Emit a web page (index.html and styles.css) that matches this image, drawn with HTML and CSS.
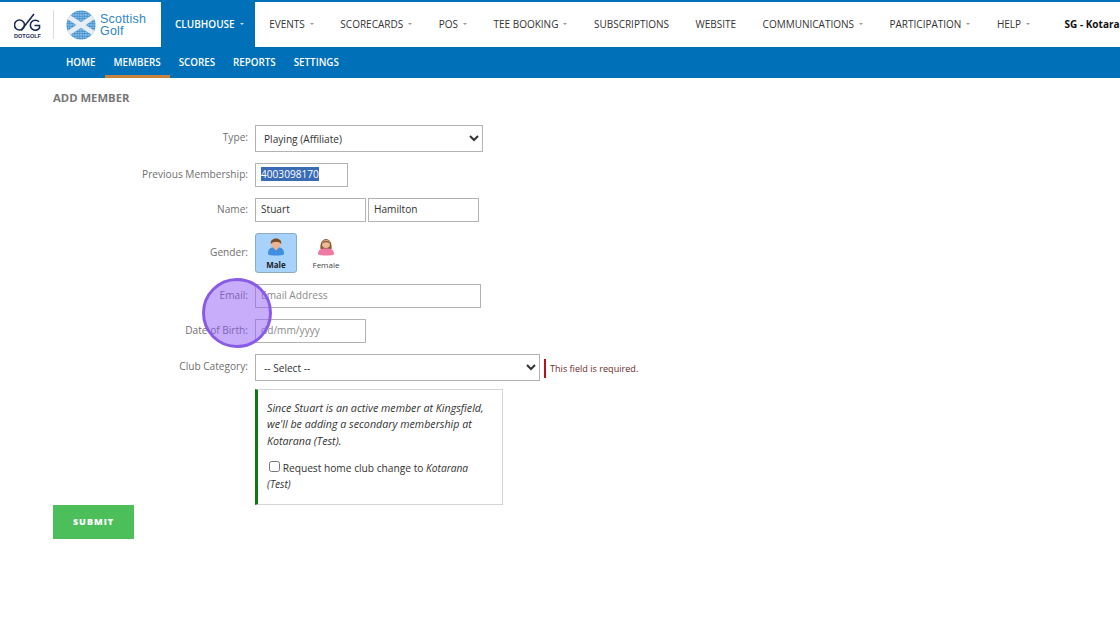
FILE: index.html
```html
<!DOCTYPE html>
<html lang="en">
<head>
<meta charset="utf-8">
<title>Add Member</title>
<link rel="stylesheet" href="styles.css">
</head>
<body>
<header class="topbar">
  <div class="brand">
    <div class="dotgolf">
      <svg class="dg-mark" width="27" height="20" viewBox="0 0 27 20" fill="none">
        <circle cx="5.500" cy="12" r="5" stroke="#1b2a55" stroke-width="1.600"/>
        <path d="M7 17.500 L20 1" stroke="#1b2a55" stroke-width="1.600"/>
        <path d="M25 8.800 A5 5 0 1 0 25.500 15 V12.500 H20.500" stroke="#1b2a55" stroke-width="1.600"/>
      </svg>
      <span class="dg-text">DOTGOLF</span>
    </div>
    <span class="brand-sep"></span>
    <svg class="sg-ball" width="30" height="30" viewBox="0 0 30 30">
      <defs>
        <pattern id="dots" width="2.500" height="2.500" patternUnits="userSpaceOnUse">
          <circle cx="1.250" cy="1.250" r="1.100" fill="#2b84cb"/>
        </pattern>
        <clipPath id="ball"><circle cx="15" cy="15" r="14.500"/></clipPath>
      </defs>
      <circle cx="15" cy="15" r="14.500" fill="#b5d4ec"/>
      <circle cx="15" cy="15" r="14.500" fill="url(#dots)"/>
      <g clip-path="url(#ball)" stroke="#e6edf5" stroke-width="5">
        <path d="M1 6 L29 24"/>
        <path d="M29 6 L1 24"/>
      </g>
    </svg>
    <span class="sg-text">Scottish<br>Golf</span>
  </div>
  <nav class="mainnav">
    <a class="mainnav-item is-active caret">CLUBHOUSE</a>
    <a class="mainnav-item caret">EVENTS</a>
    <a class="mainnav-item caret">SCORECARDS</a>
    <a class="mainnav-item caret">POS</a>
    <a class="mainnav-item caret">TEE BOOKING</a>
    <a class="mainnav-item">SUBSCRIPTIONS</a>
    <a class="mainnav-item">WEBSITE</a>
    <a class="mainnav-item caret">COMMUNICATIONS</a>
    <a class="mainnav-item caret">PARTICIPATION</a>
    <a class="mainnav-item caret">HELP</a>
    <a class="mainnav-item user">SG - Kotarana (Test)</a>
  </nav>
</header>
<nav class="subnav">
  <a class="subnav-item subnav-home">HOME</a>
  <a class="subnav-item is-current">MEMBERS</a>
  <a class="subnav-item">SCORES</a>
  <a class="subnav-item">REPORTS</a>
  <a class="subnav-item">SETTINGS</a>
</nav>
<main class="content">
  <h1 class="page-title">ADD MEMBER</h1>
  <form class="form">
    <div class="row row-select">
      <label class="lbl">Type:</label>
      <select class="ctl sel sel-type"><option>Playing (Affiliate)</option></select>
    </div>
    <div class="row">
      <label class="lbl">Previous Membership:</label>
      <div class="ctl txt txt-prev"><span class="selected">4003098170</span></div>
    </div>
    <div class="row">
      <label class="lbl">Name:</label>
      <div class="pair">
        <input class="ctl txt txt-name" value="Stuart">
        <input class="ctl txt txt-name" value="Hamilton">
      </div>
    </div>
    <div class="row row-gender">
      <label class="lbl">Gender:</label>
      <div class="genders">
        <div class="gender is-on">
          <svg width="20" height="20" viewBox="0 0 20 20">
            <path d="M2 17 C2 12 4 11 6.500 10.500 H13.500 C16 11 18 12 18 17 C18 19 2 19 2 17 Z" fill="#3f8ee0"/>
            <circle cx="10" cy="6.500" r="5" fill="#e9b48f"/>
            <path d="M4.800 7 C3.500 -0.500 16.500 -0.500 15.200 7 C13.500 4 7 4 4.800 7 Z" fill="#7a4a26"/>
            <path d="M7.500 11 L10 13.500 L12.500 11 Z" fill="#e9b48f"/>
          </svg>
          <span class="gender-name">Male</span>
        </div>
        <div class="gender">
          <svg width="20" height="20" viewBox="0 0 20 20">
            <path d="M4.500 12 C3 -1.500 17 -1.500 15.500 12 Z" fill="#8a5a34"/>
            <path d="M2 17 C2 12.500 5 11.500 10 11.500 C15 11.500 18 12.500 18 17 C18 19 2 19 2 17 Z" fill="#ef7aa4"/>
            <circle cx="10" cy="7" r="4" fill="#eeb997"/>
            <path d="M6 7 C6 2.500 14 2.500 14 7 C12 4.500 8 4.500 6 7 Z" fill="#8a5a34"/>
          </svg>
          <span class="gender-name">Female</span>
        </div>
      </div>
    </div>
    <div class="row">
      <label class="lbl">Email:</label>
      <input class="ctl txt txt-email" placeholder="Email Address">
    </div>
    <div class="row">
      <label class="lbl">Date of Birth:</label>
      <input class="ctl txt txt-dob" placeholder="dd/mm/yyyy">
    </div>
    <div class="row row-select row-cat">
      <label class="lbl">Club Category:</label>
      <select class="ctl sel sel-cat"><option>-- Select --</option></select>
      <span class="error">This field is required.</span>
    </div>
    <div class="row row-note">
      <span class="lbl"></span>
      <div class="note">
        <p class="note-text">Since Stuart is an active member at Kingsfield, we'll be adding a secondary membership at Kotarana (Test).</p>
        <p class="note-check"><input type="checkbox" class="check"> Request home club change to <em>Kotarana</em> <em>(Test)</em></p>
      </div>
    </div>
    <button type="button" class="submit">SUBMIT</button>
  </form>
</main>
<div class="click-marker"></div>
</body>
</html>
```
FILE: styles.css
```css
* { box-sizing: border-box; }
html, body { margin: 0; padding: 0; }
body {
  width: 1120px;
  height: 626px;
  overflow: hidden;
  background: #fff;
  font-family: "Open Sans", "Liberation Sans", sans-serif;
  font-size: 11px;
  color: #333;
  position: relative;
}
.topbar {
  display: flex;
  height: 47px;
  border-top: 2px solid #0070b8;
  background: #fff;
  white-space: nowrap;
  overflow: hidden;
}
.brand {
  width: 161px;
  flex: none;
  display: flex;
  align-items: center;
  padding-left: 14px;
}
.dotgolf {
  width: 27px;
  display: flex;
  flex-direction: column;
  align-items: center;
}
.dg-mark { display: block; margin-top: 2px; }
.dg-text {
  font-family: "Liberation Sans", sans-serif;
  font-size: 5.500px;
  line-height: 6px;
  font-weight: 700;
  color: #1b2a55;
}
.brand-sep {
  width: 1px;
  height: 29px;
  margin: 0 12px;
  background: #dcdcdc;
}
.sg-ball { flex: none; }
.sg-text {
  font-family: "Liberation Sans", sans-serif;
  font-size: 12.500px;
  line-height: 12px;
  letter-spacing: .2px;
  color: #2f86c5;
  margin: 1px 0 0 4px;
}
.mainnav { display: flex; flex: 1; height: 45px; }
.mainnav-item {
  display: flex;
  align-items: center;
  padding: 0 13.250px 2px;
  color: #333;
  font-size: 10px;
  font-weight: 400;
}
.mainnav-item.caret::after {
  content: "";
  width: 0;
  height: 0;
  margin-left: 5px;
  border-left: 2px solid transparent;
  border-right: 2px solid transparent;
  border-top: 2px solid #999;
}
.mainnav-item.is-active {
  background: #0070b8;
  color: #fff;
  font-weight: 600;
  padding: 0 14px 2px;
  width: 94px;
  margin-right: 1px;
}
.mainnav-item.is-active::after { border-top-color: #cfe3f2; }
.mainnav-item.user { font-weight: 700; color: #111; margin-left: 8px; }
.subnav {
  display: flex;
  height: 31px;
  padding-left: 53px;
  background: #0070b8;
}
.subnav-item {
  display: flex;
  align-items: center;
  padding: 0 9px 1px;
  color: #fff;
  font-size: 9.800px;
  font-weight: 600;
}
.subnav-home { padding-left: 13px; }
.subnav-item.is-current { box-shadow: inset 0 -3px 0 #c9823e; }
.content { padding: 12px 53px 0; }
.page-title {
  margin: 0 0 20px;
  height: 15px;
  font-size: 11.300px;
  line-height: 15px;
  font-weight: 700;
  color: #777;
}
.form { display: block; }
.row {
  display: flex;
  align-items: flex-start;
  margin-bottom: 11px;
}
.lbl {
  width: 195px;
  flex: none;
  margin-right: 7px;
  text-align: right;
  color: #6f6f6f;
  font-size: 10.150px;
  line-height: 23px;
}
.row-select .lbl { line-height: 25px; }
.row-gender .lbl { line-height: 39px; }
.ctl {
  font-family: "Open Sans", "Liberation Sans", sans-serif;
  font-size: 10.150px;
  color: #333;
  background: #fff;
  border: 1px solid #b3b3b3;
  border-radius: 0;
  margin: 0;
  outline: none;
}
.sel { height: 27px; padding: 0 0 0 4px; }
.sel-type { width: 228px; }
.sel-cat { width: 285px; }
.txt { height: 24px; padding: 0 5px 2px; line-height: 21px; }
.txt::placeholder { color: #8a8a8a; opacity: 1; }
.txt-prev { width: 93px; }
.selected { background: #3a6cb5; color: #fff; display: inline-block; line-height: 14px; }
.pair { display: flex; gap: 2px; }
.txt-name { width: 111px; }
.txt-email { width: 226px; }
.txt-dob { width: 111px; }
.genders { display: flex; gap: 8px; }
.gender {
  width: 42px;
  height: 40px;
  padding-top: 3px;
  border: 1px solid transparent;
  border-radius: 3px;
  display: flex;
  flex-direction: column;
  align-items: center;
}
.gender svg { display: block; }
.gender.is-on {
  background: #a6d2fb;
  border-color: #8fa9c2;
}
.gender-name { font-size: 8px; line-height: 12px; margin-top: 2px; color: #444; }
.is-on .gender-name { font-weight: 700; color: #222; }
.error {
  margin: 5px 0 0 4px;
  padding-left: 4px;
  border-left: 2px solid #b5121b;
  height: 19px;
  line-height: 19px;
  font-size: 9.100px;
  color: #6e2a2a;
}
.row-cat { margin-bottom: 8px; }
.row-note { margin-bottom: 0; }
.row-note .lbl { line-height: 1; }
.note {
  width: 248px;
  height: 116px;
  padding: 10px 9px 0 9px;
  border: 1px solid #d5d5d5;
  border-left: 3px solid #0b7a13;
  font-size: 10.700px;
  line-height: 16.300px;
  color: #333;
}
.note p { margin: 0; }
.note-text { font-style: italic; }
.note-check { margin-top: 11px !important; font-size: 10.200px; }
.check { margin: 0 0 0 2px; width: 11px; height: 11px; vertical-align: 0; }
.submit {
  display: block;
  width: 81px;
  height: 34px;
  padding: 0 0 2px;
  border: 0;
  background: #4cbf5b;
  color: #fff;
  font-family: "Open Sans", "Liberation Sans", sans-serif;
  font-size: 9px;
  font-weight: 800;
  letter-spacing: 1px;
}
.click-marker {
  position: absolute;
  left: 202px;
  top: 278px;
  width: 70px;
  height: 70px;
  border-radius: 50%;
  background: rgba(143, 92, 246, .5);
  border: 3px solid #8a5ce6;
}
```
